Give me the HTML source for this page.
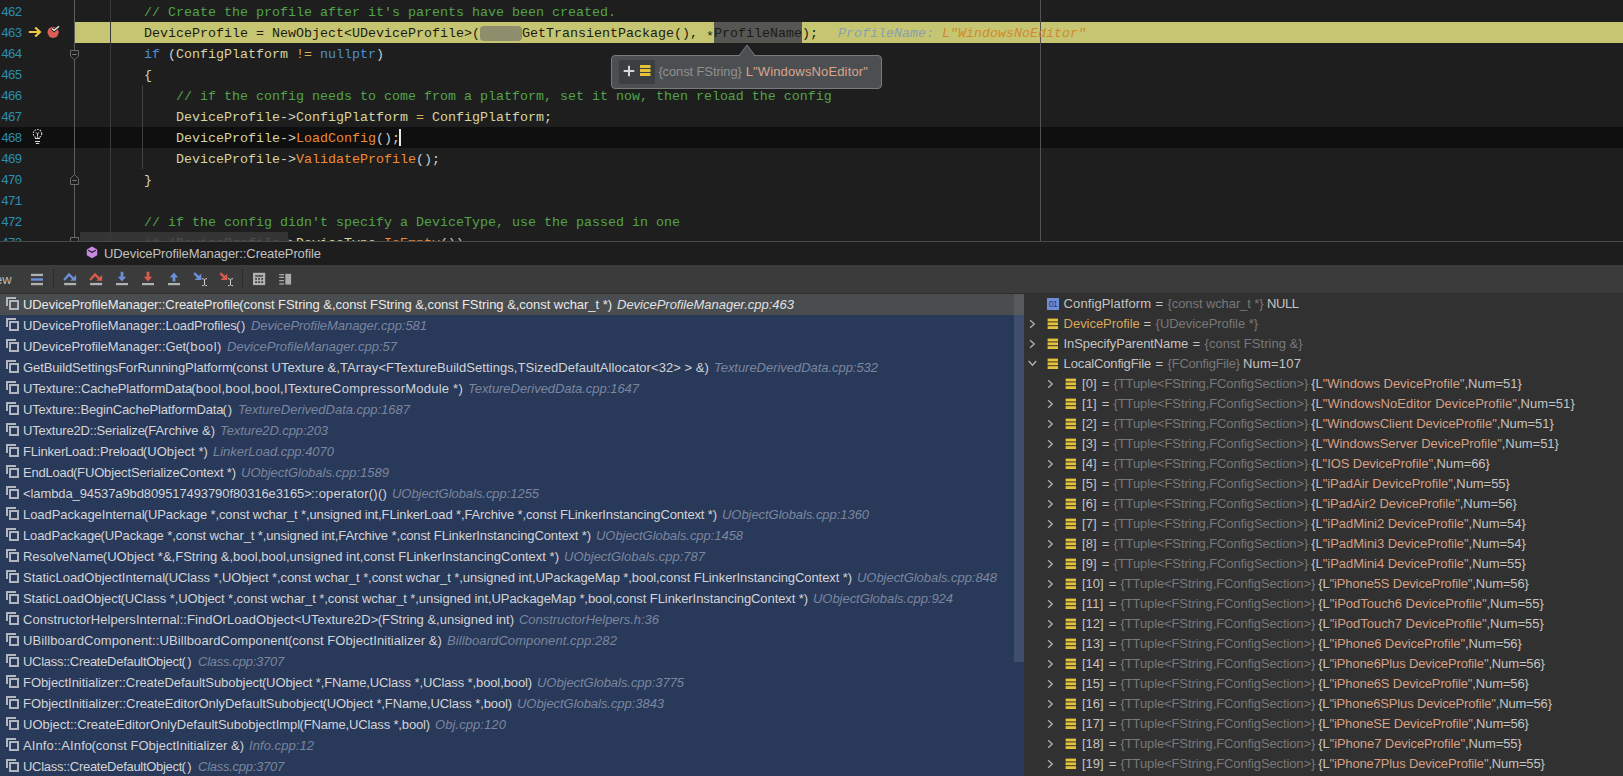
<!DOCTYPE html>
<html><head><meta charset="utf-8"><title>debugger</title>
<style>
html,body{margin:0;padding:0;}
body{width:1623px;height:776px;overflow:hidden;background:#1e1e1e;position:relative;font-family:"Liberation Sans",sans-serif;}
.abs{position:absolute;}
#editor{position:absolute;left:0;top:0;width:1623px;height:241px;background:#1e1e1e;overflow:hidden;}
.ln{position:absolute;left:0;width:1623px;height:21px;}
.num{position:absolute;left:1px;top:0;height:21px;line-height:21px;font-family:"Liberation Mono",monospace;font-size:13px;color:#2b8fb3;letter-spacing:-1px;}
.code{position:absolute;left:144px;top:0;height:21px;line-height:21px;font-family:"Liberation Mono",monospace;font-size:13.333px;color:#d6d4a0;white-space:pre;}
.c{color:#52a349;} .k{color:#4f8fd0;} .m{color:#f08a32;} .p{color:#c4d0d8;} .o{color:#dcae52;} .w{color:#d2d2c2;}
.dk{color:#1c1c14;}
#crumb{position:absolute;left:0;top:241px;width:1623px;height:24px;background:#1d1d1d;border-top:1px solid #484848;box-sizing:border-box;}
#tbar{position:absolute;left:0;top:265px;width:1623px;height:29px;background:#3b3b3b;border-bottom:1px solid #2e2e2e;box-sizing:border-box;}
#stack{position:absolute;left:0;top:294px;width:1024px;height:482px;background:#293959;overflow:hidden;}
.fr{position:absolute;left:0;width:1014px;height:21px;line-height:21px;font-size:13px;color:#d2d4d8;white-space:pre;}
.fr .t{position:absolute;left:23px;top:0;}
.fr .l{position:absolute;top:0;font-style:italic;color:#7a869f;}
.fr svg{position:absolute;left:5px;top:2px;}
#vars{position:absolute;left:1024px;top:294px;width:599px;height:482px;background:#313131;overflow:hidden;}
.vr{position:absolute;left:0;width:599px;height:20px;line-height:20px;font-size:13px;color:#c4c4c4;white-space:pre;}
.vr .t{position:absolute;top:0;}
.g{color:#787878;} .s{color:#d6a084;} .y{color:#dca85a;}
</style></head><body>

<div id="editor">
<div class="abs" style="left:0;top:127px;width:1623px;height:21px;background:#0f0f0f"></div>
<div class="abs" style="left:75px;top:22px;width:1548px;height:21px;background:#c6c672"></div>
<div class="abs" style="left:714px;top:22px;width:88px;height:21px;background:#565652"></div>
<div class="abs" style="left:480px;top:26px;width:42px;height:15px;border-radius:4px;background:#8e8e6c"></div>
<div class="abs" style="left:74px;top:0;width:1px;height:241px;background:#5e5e5e"></div>
<div class="abs" style="left:110px;top:0;width:1px;height:241px;background:#3a3a3a"></div>
<div class="abs" style="left:142px;top:85px;width:1px;height:84px;background:#404040"></div>
<div class="abs" style="left:1040px;top:0;width:1px;height:241px;background:#525252"></div>
<div class="ln" style="top:2px"><span class="num">462</span><span class="code"><span class="c">// Create the profile after it's parents have been created.</span></span></div>
<div class="ln" style="top:23px"><span class="num">463</span><span class="code"><span class="dk">DeviceProfile = NewObject&lt;UDeviceProfile&gt;(<span style="display:inline-block;width:42px"></span>GetTransientPackage(), <span style="position:relative;top:2.5px">*</span>ProfileName);</span></span></div>
<div class="ln" style="top:44px"><span class="num">464</span><span class="code"><span class="k">if</span> <span class="p">(</span>ConfigPlatform <span class="o">!=</span> <span class="k">nullptr</span><span class="p">)</span></span></div>
<div class="ln" style="top:65px"><span class="num">465</span><span class="code"><span class="w">{</span></span></div>
<div class="ln" style="top:86px"><span class="num">466</span><span class="code">    <span class="c">// if the config needs to come from a platform, set it now, then reload the config</span></span></div>
<div class="ln" style="top:107px"><span class="num">467</span><span class="code">    DeviceProfile<span class="w">-&gt;</span>ConfigPlatform <span class="o">=</span> ConfigPlatform<span class="w">;</span></span></div>
<div class="ln" style="top:128px"><span class="num">468</span><span class="code">    DeviceProfile<span class="w">-&gt;</span><span class="m">LoadConfig</span><span class="p">()</span><span class="w">;</span></span></div>
<div class="ln" style="top:149px"><span class="num">469</span><span class="code">    DeviceProfile<span class="w">-&gt;</span><span class="m">ValidateProfile</span><span class="p">()</span><span class="w">;</span></span></div>
<div class="ln" style="top:170px"><span class="num">470</span><span class="code"><span class="w">}</span></span></div>
<div class="ln" style="top:191px"><span class="num">471</span><span class="code"></span></div>
<div class="ln" style="top:212px"><span class="num">472</span><span class="code"><span class="c">// if the config didn't specify a DeviceType, use the passed in one</span></span></div>
<div class="ln" style="top:233px"><span class="num">473</span><span class="code"><span class="k">if</span> <span class="p">(</span>DeviceProfile<span class="w">-&gt;</span>DeviceType<span class="w">.</span><span class="m">IsEmpty</span><span class="p">())</span></span></div>
<div class="abs" style="left:838px;top:23px;height:21px;line-height:21px;font-family:'Liberation Mono',monospace;font-size:13.333px;font-style:italic;white-space:pre;color:#8a9fb0">ProfileName: <span style="color:#cf8a2e">L"WindowsNoEditor"</span></div>
<svg class="abs" style="left:27px;top:25px" width="16" height="14" viewBox="0 0 16 14"><path d="M1.8 7 H12.6 M8.2 2.4 L13 7 L8.2 11.6" fill="none" stroke="#f2c744" stroke-width="2.1" stroke-linecap="butt" stroke-linejoin="miter"/></svg>
<svg class="abs" style="left:45px;top:23px" width="18" height="18" viewBox="0 0 18 18"><circle cx="8.1" cy="9.3" r="5.6" fill="#db5d55"/><path d="M6.6 5.4 L9.2 7.5 L14.2 3.2" fill="none" stroke="#1e1e1e" stroke-width="3"/><path d="M6.8 5.5 L9.2 7.4 L14 3.3" fill="none" stroke="#e4e4e4" stroke-width="1.5"/></svg>
<svg class="abs" style="left:69px;top:49px" width="12" height="13" viewBox="0 0 12 13"><path d="M1.5 1.5 H9.5 V7 L5.5 11 L1.5 7 Z" fill="#1e1e1e" stroke="#6a6a6a" stroke-width="1"/><path d="M3.3 5.5 H7.7" stroke="#7a7a7a" stroke-width="1"/></svg>
<svg class="abs" style="left:69px;top:173px" width="12" height="13" viewBox="0 0 12 13"><path d="M1.5 11.5 H9.5 V5.5 L5.5 1.5 L1.5 5.5 Z" fill="#1e1e1e" stroke="#6a6a6a" stroke-width="1"/><path d="M3.3 7.5 H7.7" stroke="#7a7a7a" stroke-width="1"/></svg>
<svg class="abs" style="left:69px;top:236px" width="12" height="13" viewBox="0 0 12 13"><path d="M1.5 1.5 H9.5 V7 L5.5 11 L1.5 7 Z" fill="#1e1e1e" stroke="#6a6a6a" stroke-width="1"/></svg>
<svg class="abs" style="left:32px;top:129px" width="12" height="16" viewBox="0 0 12 16"><circle cx="5.5" cy="4.6" r="4.2" fill="none" stroke="#d4d4d4" stroke-width="1.1" stroke-dasharray="1.6 1.1"/><path d="M4.1 3.4 L5.5 5 L6.9 3.4 M5.5 5 V7.6" fill="none" stroke="#d4d4d4" stroke-width="1"/><path d="M3 9.5 H8 M3 12.5 H8 M3.8 14.5 H7.2" stroke="#dcdcdc" stroke-width="1.1"/></svg>
<div class="abs" style="left:399px;top:129px;width:2px;height:17px;background:#e8e8e8"></div>
<div class="abs" style="left:80px;top:232px;width:208px;height:9px;background:#3a3a3a;opacity:.85"></div>
</div>
<div class="abs" style="left:611px;top:55px;width:271px;height:34px;box-sizing:border-box;background:#4c4f51;border:1px solid #787a7c;border-radius:4px;"></div>
<svg class="abs" style="left:735.5px;top:43.6px" width="22" height="13" viewBox="0 0 22 13"><path d="M3.5 11 L11 1 L18.5 11" fill="#4c4f51" stroke="#787a7c" stroke-width="1"/><rect x="4.2" y="10.6" width="13.6" height="1.6" fill="#4c4f51"/></svg>
<div class="abs" style="left:619px;top:60px;width:36px;height:24px;background:#3c3f41;border-radius:1px"></div>
<div class="abs" style="letter-spacing:-0.1252px;left:658.4px;top:61px;height:21px;line-height:21px;font-size:13px;white-space:pre;color:#8e9092">{const FString}</div>
<div class="abs" style="letter-spacing:0.1403px;left:745.7px;top:61px;height:21px;line-height:21px;font-size:13px;white-space:pre;color:#dba48a">L"WindowsNoEditor"</div>
<svg class="abs" style="left:623px;top:65px" width="12" height="12" viewBox="0 0 12 12"><path d="M6 0.7 V11.3 M0.7 6 H11.3" stroke="#d8d8d8" stroke-width="2"/></svg>
<svg class="abs" style="left:640px;top:65px" width="12" height="12" viewBox="0 0 12 12"><rect x="0" y="0" width="10.5" height="3" fill="#e6c23a"/><rect x="0" y="4" width="10.5" height="3" fill="#e6c23a"/><rect x="0" y="8" width="10.5" height="3" fill="#e6c23a"/></svg>
<div id="crumb"><svg class="abs" style="left:86px;top:4px" width="12" height="13" viewBox="0 0 12 13"><path d="M6 0.6 L11.2 3.4 V9.2 L6 12.2 L0.8 9.2 V3.4 Z" fill="#c78ae0"/><path d="M2.2 4.2 L6 6.3 L9.8 4.2" fill="none" stroke="#2a1f30" stroke-width="1.3"/></svg><div class="abs" style="left:104px;top:0;letter-spacing:-0.0938px;height:23px;line-height:23px;font-size:13px;color:#c0c0c0;white-space:pre">UDeviceProfileManager::CreateProfile</div></div>
<div id="tbar"><div class="abs" style="left:-5px;top:1px;height:29px;line-height:28px;font-size:13px;color:#bbbbbb">ew</div>
<svg class="abs" style="left:31px;top:8px" width="12" height="13" viewBox="0 0 12 13"><rect x="0" y="0.8" width="12" height="2.3" fill="#afb1b3"/><rect x="0" y="5.3" width="12" height="2.4" fill="#6d8fd8"/><rect x="0" y="9.9" width="12" height="2.3" fill="#afb1b3"/></svg>
<div class="abs" style="left:53px;top:4px;width:1px;height:19px;background:#2d2d2d"></div>
<svg class="abs" style="left:63px;top:5px" width="14" height="17" viewBox="0 0 14 17"><path d="M1.1 9.9 L6.0 4.4 L10.6 9" fill="none" stroke="#6d8fd8" stroke-width="2.3"/><path d="M13.1 5.0 V10.8 H7.3 Z" fill="#6d8fd8"/><rect x="1.1" y="12.9" width="12" height="2.3" fill="#afb1b3"/></svg>
<svg class="abs" style="left:89px;top:5px" width="14" height="17" viewBox="0 0 14 17"><path d="M1.1 9.9 L6.0 4.4 L10.6 9" fill="none" stroke="#da5a4c" stroke-width="2.3"/><path d="M13.1 5.0 V10.8 H7.3 Z" fill="#da5a4c"/><rect x="1.1" y="12.9" width="12" height="2.3" fill="#afb1b3"/></svg>
<svg class="abs" style="left:115px;top:5px" width="14" height="17" viewBox="0 0 14 17"><rect x="5.6" y="1.8" width="2.8" height="6" fill="#6d8fd8"/><path d="M2.8 6.8 H11.2 L7 11.4 Z" fill="#6d8fd8"/><rect x="1" y="13" width="12" height="2.2" fill="#afb1b3"/></svg>
<svg class="abs" style="left:141px;top:5px" width="14" height="17" viewBox="0 0 14 17"><rect x="5.6" y="1.8" width="2.8" height="6" fill="#da5a4c"/><path d="M2.8 6.8 H11.2 L7 11.4 Z" fill="#da5a4c"/><rect x="1" y="13" width="12" height="2.2" fill="#afb1b3"/></svg>
<svg class="abs" style="left:167px;top:5px" width="14" height="17" viewBox="0 0 14 17"><path d="M2.8 7.4 H11.2 L7 2.4 Z" fill="#6d8fd8"/><rect x="5.6" y="7" width="2.8" height="4.6" fill="#6d8fd8"/><rect x="1" y="13" width="12" height="2.2" fill="#afb1b3"/></svg>
<svg class="abs" style="left:192px;top:5px" width="16" height="18" viewBox="0 0 16 18"><path d="M2.2 3.2 L7.6 8.3" fill="none" stroke="#6d8fd8" stroke-width="2.4"/><path d="M9.3 3.6 V9.9 H2.6 Z" fill="#6d8fd8"/><path d="M10 8.7 Q11.8 8.7 12.5 9.6 Q13.2 8.7 15 8.7 M10 15.7 Q11.8 15.7 12.5 14.8 Q13.2 15.7 15 15.7 M12.5 9.4 V15" fill="none" stroke="#cfcfcf" stroke-width="1"/></svg>
<svg class="abs" style="left:218px;top:5px" width="16" height="18" viewBox="0 0 16 18"><path d="M2.2 3.2 L7.6 8.3" fill="none" stroke="#da5a4c" stroke-width="2.4"/><path d="M9.3 3.6 V9.9 H2.6 Z" fill="#da5a4c"/><path d="M10 8.7 Q11.8 8.7 12.5 9.6 Q13.2 8.7 15 8.7 M10 15.7 Q11.8 15.7 12.5 14.8 Q13.2 15.7 15 15.7 M12.5 9.4 V15" fill="none" stroke="#cfcfcf" stroke-width="1"/></svg>
<div class="abs" style="left:242px;top:4px;width:1px;height:19px;background:#2d2d2d"></div>
<svg class="abs" style="left:253px;top:7px" width="13" height="14" viewBox="0 0 13 14"><rect x="0" y="0.8" width="12.2" height="12.3" fill="#afb1b3"/><g fill="#323232"><rect x="2.2" y="3.3" width="7.8" height="1.3"/><rect x="2.2" y="6.1" width="1.7" height="1.6"/><rect x="5.2" y="6.1" width="1.7" height="1.6"/><rect x="8.3" y="6.1" width="1.7" height="1.6"/><rect x="2.2" y="9.3" width="1.7" height="1.7"/><rect x="5.2" y="9.3" width="1.7" height="1.7"/><rect x="8.3" y="9.3" width="1.7" height="1.7"/></g></svg>
<svg class="abs" style="left:279px;top:8px" width="13" height="13" viewBox="0 0 13 13"><g fill="#afb1b3"><rect x="0.2" y="1.1" width="4.8" height="1.2"/><rect x="0.2" y="3.8" width="4.8" height="1.2"/><rect x="0.2" y="7.1" width="4.8" height="1.2"/><rect x="0.2" y="10.3" width="4.8" height="1.2"/></g><rect x="6.3" y="0.8" width="5.8" height="10.8" fill="#a9abad"/></svg>
</div>
<div id="stack">
<div class="abs" style="left:0;top:0;width:1014px;height:21px;background:#4a4d4f"></div>

<div class="abs" style="left:1014px;top:0;width:10px;height:368px;background:#414d6c"></div>
<div class="abs" style="left:1014px;top:0;width:10px;height:21px;background:#575a5c"></div>
<div class="fr" style="top:0px"><svg width="15" height="15" viewBox="0 0 15 15"><path d="M2 10 V2 H11" fill="none" stroke="#b2b6be" stroke-width="2"/><rect x="5" y="5" width="8" height="8" fill="none" stroke="#b2b6be" stroke-width="2"/></svg><span class="t" style="letter-spacing:-0.0938px;color:#e8e8e8;">UDeviceProfileManager::CreateProfile</span><span class="t" style="left:239.3px;letter-spacing:-0.0349px;color:#e8e8e8;">(const FString &amp;,const FString &amp;,const FString &amp;,const wchar_t *)</span><span class="l" style="left:617px;letter-spacing:-0.0106px;color:#e0e0e0;">DeviceProfileManager.cpp:463</span></div>
<div class="fr" style="top:21px"><svg width="15" height="15" viewBox="0 0 15 15"><path d="M2 10 V2 H11" fill="none" stroke="#b2b6be" stroke-width="2"/><rect x="5" y="5" width="8" height="8" fill="none" stroke="#b2b6be" stroke-width="2"/></svg><span class="t" style="letter-spacing:-0.0878px;">UDeviceProfileManager::LoadProfiles</span><span class="t" style="left:236.0px;letter-spacing:0.6641px;">()</span><span class="l" style="left:251px;letter-spacing:-0.0463px;">DeviceProfileManager.cpp:581</span></div>
<div class="fr" style="top:42px"><svg width="15" height="15" viewBox="0 0 15 15"><path d="M2 10 V2 H11" fill="none" stroke="#b2b6be" stroke-width="2"/><rect x="5" y="5" width="8" height="8" fill="none" stroke="#b2b6be" stroke-width="2"/></svg><span class="t" style="letter-spacing:-0.0911px;">UDeviceProfileManager::Get</span><span class="t" style="left:185.4px;letter-spacing:0.5587px;">(bool)</span><span class="l" style="left:227px;letter-spacing:-0.0023px;">DeviceProfileManager.cpp:57</span></div>
<div class="fr" style="top:63px"><svg width="15" height="15" viewBox="0 0 15 15"><path d="M2 10 V2 H11" fill="none" stroke="#b2b6be" stroke-width="2"/><rect x="5" y="5" width="8" height="8" fill="none" stroke="#b2b6be" stroke-width="2"/></svg><span class="t" style="letter-spacing:-0.1019px;">GetBuildSettingsForRunningPlatform</span><span class="t" style="left:232.0px;letter-spacing:0.0601px;">(const UTexture &amp;,TArray&lt;FTextureBuildSettings,TSizedDefaultAllocator&lt;32&gt; &gt; &amp;)</span><span class="l" style="left:714px;letter-spacing:-0.0391px;">TextureDerivedData.cpp:532</span></div>
<div class="fr" style="top:84px"><svg width="15" height="15" viewBox="0 0 15 15"><path d="M2 10 V2 H11" fill="none" stroke="#b2b6be" stroke-width="2"/><rect x="5" y="5" width="8" height="8" fill="none" stroke="#b2b6be" stroke-width="2"/></svg><span class="t" style="letter-spacing:-0.1366px;">UTexture::CachePlatformData</span><span class="t" style="left:191.3px;letter-spacing:0.2351px;">(bool,bool,bool,ITextureCompressorModule *)</span><span class="l" style="left:468px;letter-spacing:-0.0463px;">TextureDerivedData.cpp:1647</span></div>
<div class="fr" style="top:105px"><svg width="15" height="15" viewBox="0 0 15 15"><path d="M2 10 V2 H11" fill="none" stroke="#b2b6be" stroke-width="2"/><rect x="5" y="5" width="8" height="8" fill="none" stroke="#b2b6be" stroke-width="2"/></svg><span class="t" style="letter-spacing:-0.1764px;">UTexture::BeginCachePlatformData</span><span class="t" style="left:222.6px;letter-spacing:0.8704px;">()</span><span class="l" style="left:238px;letter-spacing:-0.0093px;">TextureDerivedData.cpp:1687</span></div>
<div class="fr" style="top:126px"><svg width="15" height="15" viewBox="0 0 15 15"><path d="M2 10 V2 H11" fill="none" stroke="#b2b6be" stroke-width="2"/><rect x="5" y="5" width="8" height="8" fill="none" stroke="#b2b6be" stroke-width="2"/></svg><span class="t" style="letter-spacing:-0.1917px;">UTexture2D::Serialize</span><span class="t" style="left:144.0px;letter-spacing:-0.0430px;">(FArchive &amp;)</span><span class="l" style="left:220px;letter-spacing:-0.0809px;">Texture2D.cpp:203</span></div>
<div class="fr" style="top:147px"><svg width="15" height="15" viewBox="0 0 15 15"><path d="M2 10 V2 H11" fill="none" stroke="#b2b6be" stroke-width="2"/><rect x="5" y="5" width="8" height="8" fill="none" stroke="#b2b6be" stroke-width="2"/></svg><span class="t" style="letter-spacing:-0.1906px;">FLinkerLoad::Preload</span><span class="t" style="left:142.8px;letter-spacing:0.0826px;">(UObject *)</span><span class="l" style="left:213px;letter-spacing:-0.0230px;">LinkerLoad.cpp:4070</span></div>
<div class="fr" style="top:168px"><svg width="15" height="15" viewBox="0 0 15 15"><path d="M2 10 V2 H11" fill="none" stroke="#b2b6be" stroke-width="2"/><rect x="5" y="5" width="8" height="8" fill="none" stroke="#b2b6be" stroke-width="2"/></svg><span class="t" style="letter-spacing:-0.2084px;">EndLoad</span><span class="t" style="left:72.9px;letter-spacing:-0.1353px;">(FUObjectSerializeContext *)</span><span class="l" style="left:241px;letter-spacing:-0.0068px;">UObjectGlobals.cpp:1589</span></div>
<div class="fr" style="top:189px"><svg width="15" height="15" viewBox="0 0 15 15"><path d="M2 10 V2 H11" fill="none" stroke="#b2b6be" stroke-width="2"/><rect x="5" y="5" width="8" height="8" fill="none" stroke="#b2b6be" stroke-width="2"/></svg><span class="t" style="letter-spacing:-0.1002px;">&lt;lambda_94537a9bd809517493790f80316e3165&gt;</span><span class="t" style="left:311.0px;letter-spacing:0.2165px;">::operator()()</span><span class="l" style="left:392px;letter-spacing:-0.0503px;">UObjectGlobals.cpp:1255</span></div>
<div class="fr" style="top:210px"><svg width="15" height="15" viewBox="0 0 15 15"><path d="M2 10 V2 H11" fill="none" stroke="#b2b6be" stroke-width="2"/><rect x="5" y="5" width="8" height="8" fill="none" stroke="#b2b6be" stroke-width="2"/></svg><span class="t" style="letter-spacing:-0.0724px;">LoadPackageInternal</span><span class="t" style="left:143.8px;letter-spacing:-0.1223px;">(UPackage *,const wchar_t *,unsigned int,FLinkerLoad *,FArchive *,const FLinkerInstancingContext *)</span><span class="l" style="left:722px;letter-spacing:-0.0503px;">UObjectGlobals.cpp:1360</span></div>
<div class="fr" style="top:231px"><svg width="15" height="15" viewBox="0 0 15 15"><path d="M2 10 V2 H11" fill="none" stroke="#b2b6be" stroke-width="2"/><rect x="5" y="5" width="8" height="8" fill="none" stroke="#b2b6be" stroke-width="2"/></svg><span class="t" style="letter-spacing:-0.1205px;">LoadPackage</span><span class="t" style="left:100.5px;letter-spacing:-0.1206px;">(UPackage *,const wchar_t *,unsigned int,FArchive *,const FLinkerInstancingContext *)</span><span class="l" style="left:596px;letter-spacing:-0.0503px;">UObjectGlobals.cpp:1458</span></div>
<div class="fr" style="top:252px"><svg width="15" height="15" viewBox="0 0 15 15"><path d="M2 10 V2 H11" fill="none" stroke="#b2b6be" stroke-width="2"/><rect x="5" y="5" width="8" height="8" fill="none" stroke="#b2b6be" stroke-width="2"/></svg><span class="t" style="letter-spacing:-0.1051px;">ResolveName</span><span class="t" style="left:102.8px;letter-spacing:0.0124px;">(UObject *&amp;,FString &amp;,bool,bool,unsigned int,const FLinkerInstancingContext *)</span><span class="l" style="left:564px;letter-spacing:0.0036px;">UObjectGlobals.cpp:787</span></div>
<div class="fr" style="top:273px"><svg width="15" height="15" viewBox="0 0 15 15"><path d="M2 10 V2 H11" fill="none" stroke="#b2b6be" stroke-width="2"/><rect x="5" y="5" width="8" height="8" fill="none" stroke="#b2b6be" stroke-width="2"/></svg><span class="t" style="letter-spacing:-0.0113px;">StaticLoadObjectInternal</span><span class="t" style="left:164.4px;letter-spacing:-0.0828px;">(UClass *,UObject *,const wchar_t *,const wchar_t *,unsigned int,UPackageMap *,bool,const FLinkerInstancingContext *)</span><span class="l" style="left:857px;letter-spacing:-0.0419px;">UObjectGlobals.cpp:848</span></div>
<div class="fr" style="top:294px"><svg width="15" height="15" viewBox="0 0 15 15"><path d="M2 10 V2 H11" fill="none" stroke="#b2b6be" stroke-width="2"/><rect x="5" y="5" width="8" height="8" fill="none" stroke="#b2b6be" stroke-width="2"/></svg><span class="t" style="letter-spacing:-0.0506px;">StaticLoadObject</span><span class="t" style="left:120.5px;letter-spacing:-0.0836px;">(UClass *,UObject *,const wchar_t *,const wchar_t *,unsigned int,UPackageMap *,bool,const FLinkerInstancingContext *)</span><span class="l" style="left:813px;letter-spacing:-0.0419px;">UObjectGlobals.cpp:924</span></div>
<div class="fr" style="top:315px"><svg width="15" height="15" viewBox="0 0 15 15"><path d="M2 10 V2 H11" fill="none" stroke="#b2b6be" stroke-width="2"/><rect x="5" y="5" width="8" height="8" fill="none" stroke="#b2b6be" stroke-width="2"/></svg><span class="t" style="letter-spacing:0.0496px;">ConstructorHelpersInternal::FindOrLoadObject&lt;UTexture2D&gt;</span><span class="t" style="left:377.7px;letter-spacing:-0.0113px;">(FString &amp;,unsigned int)</span><span class="l" style="left:519px;letter-spacing:-0.0394px;">ConstructorHelpers.h:36</span></div>
<div class="fr" style="top:336px"><svg width="15" height="15" viewBox="0 0 15 15"><path d="M2 10 V2 H11" fill="none" stroke="#b2b6be" stroke-width="2"/><rect x="5" y="5" width="8" height="8" fill="none" stroke="#b2b6be" stroke-width="2"/></svg><span class="t" style="letter-spacing:0.1000px;">UBillboardComponent::UBillboardComponent</span><span class="t" style="left:287.9px;letter-spacing:0.0595px;">(const FObjectInitializer &amp;)</span><span class="l" style="left:447px;letter-spacing:0.0895px;">BillboardComponent.cpp:282</span></div>
<div class="fr" style="top:357px"><svg width="15" height="15" viewBox="0 0 15 15"><path d="M2 10 V2 H11" fill="none" stroke="#b2b6be" stroke-width="2"/><rect x="5" y="5" width="8" height="8" fill="none" stroke="#b2b6be" stroke-width="2"/></svg><span class="t" style="letter-spacing:-0.2890px;">UClass::CreateDefaultObject</span><span class="t" style="left:181.4px;letter-spacing:1.4656px;">()</span><span class="l" style="left:198px;letter-spacing:-0.2589px;">Class.cpp:3707</span></div>
<div class="fr" style="top:378px"><svg width="15" height="15" viewBox="0 0 15 15"><path d="M2 10 V2 H11" fill="none" stroke="#b2b6be" stroke-width="2"/><rect x="5" y="5" width="8" height="8" fill="none" stroke="#b2b6be" stroke-width="2"/></svg><span class="t" style="letter-spacing:-0.0589px;">FObjectInitializer::CreateDefaultSubobject</span><span class="t" style="left:261.9px;letter-spacing:-0.1148px;">(UObject *,FName,UClass *,UClass *,bool,bool)</span><span class="l" style="left:537px;letter-spacing:-0.0503px;">UObjectGlobals.cpp:3775</span></div>
<div class="fr" style="top:399px"><svg width="15" height="15" viewBox="0 0 15 15"><path d="M2 10 V2 H11" fill="none" stroke="#b2b6be" stroke-width="2"/><rect x="5" y="5" width="8" height="8" fill="none" stroke="#b2b6be" stroke-width="2"/></svg><span class="t" style="letter-spacing:-0.0493px;">FObjectInitializer::CreateEditorOnlyDefaultSubobject</span><span class="t" style="left:322.5px;letter-spacing:-0.1094px;">(UObject *,FName,UClass *,bool)</span><span class="l" style="left:517px;letter-spacing:-0.0503px;">UObjectGlobals.cpp:3843</span></div>
<div class="fr" style="top:420px"><svg width="15" height="15" viewBox="0 0 15 15"><path d="M2 10 V2 H11" fill="none" stroke="#b2b6be" stroke-width="2"/><rect x="5" y="5" width="8" height="8" fill="none" stroke="#b2b6be" stroke-width="2"/></svg><span class="t" style="letter-spacing:-0.0059px;">UObject::CreateEditorOnlyDefaultSubobjectImpl</span><span class="t" style="left:299.5px;letter-spacing:-0.1503px;">(FName,UClass *,bool)</span><span class="l" style="left:435px;letter-spacing:0.0810px;">Obj.cpp:120</span></div>
<div class="fr" style="top:441px"><svg width="15" height="15" viewBox="0 0 15 15"><path d="M2 10 V2 H11" fill="none" stroke="#b2b6be" stroke-width="2"/><rect x="5" y="5" width="8" height="8" fill="none" stroke="#b2b6be" stroke-width="2"/></svg><span class="t" style="letter-spacing:0.1043px;">AInfo::AInfo</span><span class="t" style="left:91.5px;letter-spacing:0.0022px;">(const FObjectInitializer &amp;)</span><span class="l" style="left:249px;letter-spacing:0.0611px;">Info.cpp:12</span></div>
<div class="fr" style="top:462px"><svg width="15" height="15" viewBox="0 0 15 15"><path d="M2 10 V2 H11" fill="none" stroke="#b2b6be" stroke-width="2"/><rect x="5" y="5" width="8" height="8" fill="none" stroke="#b2b6be" stroke-width="2"/></svg><span class="t" style="letter-spacing:-0.2890px;">UClass::CreateDefaultObject</span><span class="t" style="left:181.4px;letter-spacing:1.4656px;">()</span><span class="l" style="left:198px;letter-spacing:-0.2589px;">Class.cpp:3707</span></div>
</div>
<div id="vars">
<div class="vr" style="top:0px">
<div class="abs" style="left:23px;top:4px;width:12px;height:12px;background:#6d8ed6;font-size:8.5px;line-height:12px;color:#27366a;text-align:center;letter-spacing:-0.4px">01</div>
<span class="t " style="left:39.6px;letter-spacing:0.1083px;">ConfigPlatform</span>
<span class="t " style="left:131.6px;letter-spacing:0.7971px;">=</span>
<span class="t g" style="left:143.6px;letter-spacing:-0.0984px;">{const wchar_t *}</span>
<span class="t " style="left:242.9px;letter-spacing:-0.3868px;">NULL</span>
</div>
<div class="vr" style="top:20px">
<svg class="abs" style="left:3px;top:3.5px" width="10" height="12" viewBox="0 0 10 12"><path d="M3.1 2.2 L7.3 6 L3.1 9.8" fill="none" stroke="#b2b2b2" stroke-width="1.3"/></svg>
<svg class="abs" style="left:23px;top:4px" width="12" height="12" viewBox="0 0 12 12"><rect x="0.6" y="0.6" width="10.4" height="2.8" fill="#e6c23a"/><rect x="0.6" y="4.4" width="10.4" height="2.8" fill="#e6c23a"/><rect x="0.6" y="8.2" width="10.4" height="2.8" fill="#e6c23a"/></svg>
<span class="t y" style="left:39.6px;letter-spacing:-0.0384px;">DeviceProfile</span>
<span class="t " style="left:119.6px;letter-spacing:0.7971px;">=</span>
<span class="t g" style="left:131.6px;letter-spacing:-0.0520px;">{UDeviceProfile *}</span>
</div>
<div class="vr" style="top:40px">
<svg class="abs" style="left:3px;top:3.5px" width="10" height="12" viewBox="0 0 10 12"><path d="M3.1 2.2 L7.3 6 L3.1 9.8" fill="none" stroke="#b2b2b2" stroke-width="1.3"/></svg>
<svg class="abs" style="left:23px;top:4px" width="12" height="12" viewBox="0 0 12 12"><rect x="0.6" y="0.6" width="10.4" height="2.8" fill="#e6c23a"/><rect x="0.6" y="4.4" width="10.4" height="2.8" fill="#e6c23a"/><rect x="0.6" y="8.2" width="10.4" height="2.8" fill="#e6c23a"/></svg>
<span class="t " style="left:39.6px;letter-spacing:-0.1028px;">InSpecifyParentName</span>
<span class="t " style="left:168.4px;letter-spacing:0.7971px;">=</span>
<span class="t g" style="left:180.6px;letter-spacing:0.0322px;">{const FString &amp;}</span>
</div>
<div class="vr" style="top:60px">
<svg class="abs" style="left:3px;top:5px" width="12" height="10" viewBox="0 0 12 10"><path d="M1.7 2 L5.45 6.3 L9.2 2" fill="none" stroke="#b2b2b2" stroke-width="1.3"/></svg>
<svg class="abs" style="left:23px;top:4px" width="12" height="12" viewBox="0 0 12 12"><rect x="0.6" y="0.6" width="10.4" height="2.8" fill="#e6c23a"/><rect x="0.6" y="4.4" width="10.4" height="2.8" fill="#e6c23a"/><rect x="0.6" y="8.2" width="10.4" height="2.8" fill="#e6c23a"/></svg>
<span class="t " style="left:39.6px;letter-spacing:-0.1406px;">LocalConfigFile</span>
<span class="t " style="left:131.6px;letter-spacing:0.7971px;">=</span>
<span class="t g" style="left:143.6px;letter-spacing:-0.2270px;">{FConfigFile}</span>
<span class="t " style="left:218.9px;letter-spacing:0.2231px;">Num=107</span>
</div>
<div class="vr" style="top:80px">
<svg class="abs" style="left:21px;top:3.5px" width="10" height="12" viewBox="0 0 10 12"><path d="M3.1 2.2 L7.3 6 L3.1 9.8" fill="none" stroke="#b2b2b2" stroke-width="1.3"/></svg>
<svg class="abs" style="left:41px;top:4px" width="12" height="12" viewBox="0 0 12 12"><rect x="0.6" y="0.6" width="10.4" height="2.8" fill="#e6c23a"/><rect x="0.6" y="4.4" width="10.4" height="2.8" fill="#e6c23a"/><rect x="0.6" y="8.2" width="10.4" height="2.8" fill="#e6c23a"/></svg>
<span class="t " style="left:58.0px;letter-spacing:0.0469px;">[0]</span>
<span class="t " style="left:77.8px;letter-spacing:0.4062px;">=</span>
<span class="t g" style="left:89.5px;letter-spacing:-0.1108px;">{TTuple&lt;FString,FConfigSection&gt;}</span>
<span class="t " style="left:287.2px;letter-spacing:-0.0185px;"><span>{L</span><span class="s">"Windows DeviceProfile"</span><span>,Num=51}</span></span>
</div>
<div class="vr" style="top:100px">
<svg class="abs" style="left:21px;top:3.5px" width="10" height="12" viewBox="0 0 10 12"><path d="M3.1 2.2 L7.3 6 L3.1 9.8" fill="none" stroke="#b2b2b2" stroke-width="1.3"/></svg>
<svg class="abs" style="left:41px;top:4px" width="12" height="12" viewBox="0 0 12 12"><rect x="0.6" y="0.6" width="10.4" height="2.8" fill="#e6c23a"/><rect x="0.6" y="4.4" width="10.4" height="2.8" fill="#e6c23a"/><rect x="0.6" y="8.2" width="10.4" height="2.8" fill="#e6c23a"/></svg>
<span class="t " style="left:58.0px;letter-spacing:0.0469px;">[1]</span>
<span class="t " style="left:77.8px;letter-spacing:0.4062px;">=</span>
<span class="t g" style="left:89.5px;letter-spacing:-0.1108px;">{TTuple&lt;FString,FConfigSection&gt;}</span>
<span class="t " style="left:287.2px;letter-spacing:0.0440px;"><span>{L</span><span class="s">"WindowsNoEditor DeviceProfile"</span><span>,Num=51}</span></span>
</div>
<div class="vr" style="top:120px">
<svg class="abs" style="left:21px;top:3.5px" width="10" height="12" viewBox="0 0 10 12"><path d="M3.1 2.2 L7.3 6 L3.1 9.8" fill="none" stroke="#b2b2b2" stroke-width="1.3"/></svg>
<svg class="abs" style="left:41px;top:4px" width="12" height="12" viewBox="0 0 12 12"><rect x="0.6" y="0.6" width="10.4" height="2.8" fill="#e6c23a"/><rect x="0.6" y="4.4" width="10.4" height="2.8" fill="#e6c23a"/><rect x="0.6" y="8.2" width="10.4" height="2.8" fill="#e6c23a"/></svg>
<span class="t " style="left:58.0px;letter-spacing:0.0469px;">[2]</span>
<span class="t " style="left:77.8px;letter-spacing:0.4062px;">=</span>
<span class="t g" style="left:89.5px;letter-spacing:-0.1108px;">{TTuple&lt;FString,FConfigSection&gt;}</span>
<span class="t " style="left:287.2px;letter-spacing:-0.0472px;"><span>{L</span><span class="s">"WindowsClient DeviceProfile"</span><span>,Num=51}</span></span>
</div>
<div class="vr" style="top:140px">
<svg class="abs" style="left:21px;top:3.5px" width="10" height="12" viewBox="0 0 10 12"><path d="M3.1 2.2 L7.3 6 L3.1 9.8" fill="none" stroke="#b2b2b2" stroke-width="1.3"/></svg>
<svg class="abs" style="left:41px;top:4px" width="12" height="12" viewBox="0 0 12 12"><rect x="0.6" y="0.6" width="10.4" height="2.8" fill="#e6c23a"/><rect x="0.6" y="4.4" width="10.4" height="2.8" fill="#e6c23a"/><rect x="0.6" y="8.2" width="10.4" height="2.8" fill="#e6c23a"/></svg>
<span class="t " style="left:58.0px;letter-spacing:0.0469px;">[3]</span>
<span class="t " style="left:77.8px;letter-spacing:0.4062px;">=</span>
<span class="t g" style="left:89.5px;letter-spacing:-0.1108px;">{TTuple&lt;FString,FConfigSection&gt;}</span>
<span class="t " style="left:287.2px;letter-spacing:-0.0484px;"><span>{L</span><span class="s">"WindowsServer DeviceProfile"</span><span>,Num=51}</span></span>
</div>
<div class="vr" style="top:160px">
<svg class="abs" style="left:21px;top:3.5px" width="10" height="12" viewBox="0 0 10 12"><path d="M3.1 2.2 L7.3 6 L3.1 9.8" fill="none" stroke="#b2b2b2" stroke-width="1.3"/></svg>
<svg class="abs" style="left:41px;top:4px" width="12" height="12" viewBox="0 0 12 12"><rect x="0.6" y="0.6" width="10.4" height="2.8" fill="#e6c23a"/><rect x="0.6" y="4.4" width="10.4" height="2.8" fill="#e6c23a"/><rect x="0.6" y="8.2" width="10.4" height="2.8" fill="#e6c23a"/></svg>
<span class="t " style="left:58.0px;letter-spacing:0.0469px;">[4]</span>
<span class="t " style="left:77.8px;letter-spacing:0.4062px;">=</span>
<span class="t g" style="left:89.5px;letter-spacing:-0.1108px;">{TTuple&lt;FString,FConfigSection&gt;}</span>
<span class="t " style="left:287.2px;letter-spacing:-0.0781px;"><span>{L</span><span class="s">"IOS DeviceProfile"</span><span>,Num=66}</span></span>
</div>
<div class="vr" style="top:180px">
<svg class="abs" style="left:21px;top:3.5px" width="10" height="12" viewBox="0 0 10 12"><path d="M3.1 2.2 L7.3 6 L3.1 9.8" fill="none" stroke="#b2b2b2" stroke-width="1.3"/></svg>
<svg class="abs" style="left:41px;top:4px" width="12" height="12" viewBox="0 0 12 12"><rect x="0.6" y="0.6" width="10.4" height="2.8" fill="#e6c23a"/><rect x="0.6" y="4.4" width="10.4" height="2.8" fill="#e6c23a"/><rect x="0.6" y="8.2" width="10.4" height="2.8" fill="#e6c23a"/></svg>
<span class="t " style="left:58.0px;letter-spacing:0.0469px;">[5]</span>
<span class="t " style="left:77.8px;letter-spacing:0.4062px;">=</span>
<span class="t g" style="left:89.5px;letter-spacing:-0.1108px;">{TTuple&lt;FString,FConfigSection&gt;}</span>
<span class="t " style="left:287.2px;letter-spacing:-0.0540px;"><span>{L</span><span class="s">"iPadAir DeviceProfile"</span><span>,Num=55}</span></span>
</div>
<div class="vr" style="top:200px">
<svg class="abs" style="left:21px;top:3.5px" width="10" height="12" viewBox="0 0 10 12"><path d="M3.1 2.2 L7.3 6 L3.1 9.8" fill="none" stroke="#b2b2b2" stroke-width="1.3"/></svg>
<svg class="abs" style="left:41px;top:4px" width="12" height="12" viewBox="0 0 12 12"><rect x="0.6" y="0.6" width="10.4" height="2.8" fill="#e6c23a"/><rect x="0.6" y="4.4" width="10.4" height="2.8" fill="#e6c23a"/><rect x="0.6" y="8.2" width="10.4" height="2.8" fill="#e6c23a"/></svg>
<span class="t " style="left:58.0px;letter-spacing:0.0469px;">[6]</span>
<span class="t " style="left:77.8px;letter-spacing:0.4062px;">=</span>
<span class="t g" style="left:89.5px;letter-spacing:-0.1108px;">{TTuple&lt;FString,FConfigSection&gt;}</span>
<span class="t " style="left:287.2px;letter-spacing:-0.0593px;"><span>{L</span><span class="s">"iPadAir2 DeviceProfile"</span><span>,Num=56}</span></span>
</div>
<div class="vr" style="top:220px">
<svg class="abs" style="left:21px;top:3.5px" width="10" height="12" viewBox="0 0 10 12"><path d="M3.1 2.2 L7.3 6 L3.1 9.8" fill="none" stroke="#b2b2b2" stroke-width="1.3"/></svg>
<svg class="abs" style="left:41px;top:4px" width="12" height="12" viewBox="0 0 12 12"><rect x="0.6" y="0.6" width="10.4" height="2.8" fill="#e6c23a"/><rect x="0.6" y="4.4" width="10.4" height="2.8" fill="#e6c23a"/><rect x="0.6" y="8.2" width="10.4" height="2.8" fill="#e6c23a"/></svg>
<span class="t " style="left:58.0px;letter-spacing:0.0469px;">[7]</span>
<span class="t " style="left:77.8px;letter-spacing:0.4062px;">=</span>
<span class="t g" style="left:89.5px;letter-spacing:-0.1108px;">{TTuple&lt;FString,FConfigSection&gt;}</span>
<span class="t " style="left:287.2px;letter-spacing:-0.0277px;"><span>{L</span><span class="s">"iPadMini2 DeviceProfile"</span><span>,Num=54}</span></span>
</div>
<div class="vr" style="top:240px">
<svg class="abs" style="left:21px;top:3.5px" width="10" height="12" viewBox="0 0 10 12"><path d="M3.1 2.2 L7.3 6 L3.1 9.8" fill="none" stroke="#b2b2b2" stroke-width="1.3"/></svg>
<svg class="abs" style="left:41px;top:4px" width="12" height="12" viewBox="0 0 12 12"><rect x="0.6" y="0.6" width="10.4" height="2.8" fill="#e6c23a"/><rect x="0.6" y="4.4" width="10.4" height="2.8" fill="#e6c23a"/><rect x="0.6" y="8.2" width="10.4" height="2.8" fill="#e6c23a"/></svg>
<span class="t " style="left:58.0px;letter-spacing:0.0469px;">[8]</span>
<span class="t " style="left:77.8px;letter-spacing:0.4062px;">=</span>
<span class="t g" style="left:89.5px;letter-spacing:-0.1108px;">{TTuple&lt;FString,FConfigSection&gt;}</span>
<span class="t " style="left:287.2px;letter-spacing:-0.0277px;"><span>{L</span><span class="s">"iPadMini3 DeviceProfile"</span><span>,Num=54}</span></span>
</div>
<div class="vr" style="top:260px">
<svg class="abs" style="left:21px;top:3.5px" width="10" height="12" viewBox="0 0 10 12"><path d="M3.1 2.2 L7.3 6 L3.1 9.8" fill="none" stroke="#b2b2b2" stroke-width="1.3"/></svg>
<svg class="abs" style="left:41px;top:4px" width="12" height="12" viewBox="0 0 12 12"><rect x="0.6" y="0.6" width="10.4" height="2.8" fill="#e6c23a"/><rect x="0.6" y="4.4" width="10.4" height="2.8" fill="#e6c23a"/><rect x="0.6" y="8.2" width="10.4" height="2.8" fill="#e6c23a"/></svg>
<span class="t " style="left:58.0px;letter-spacing:0.0469px;">[9]</span>
<span class="t " style="left:77.8px;letter-spacing:0.4062px;">=</span>
<span class="t g" style="left:89.5px;letter-spacing:-0.1108px;">{TTuple&lt;FString,FConfigSection&gt;}</span>
<span class="t " style="left:287.2px;letter-spacing:-0.0277px;"><span>{L</span><span class="s">"iPadMini4 DeviceProfile"</span><span>,Num=55}</span></span>
</div>
<div class="vr" style="top:280px">
<svg class="abs" style="left:21px;top:3.5px" width="10" height="12" viewBox="0 0 10 12"><path d="M3.1 2.2 L7.3 6 L3.1 9.8" fill="none" stroke="#b2b2b2" stroke-width="1.3"/></svg>
<svg class="abs" style="left:41px;top:4px" width="12" height="12" viewBox="0 0 12 12"><rect x="0.6" y="0.6" width="10.4" height="2.8" fill="#e6c23a"/><rect x="0.6" y="4.4" width="10.4" height="2.8" fill="#e6c23a"/><rect x="0.6" y="8.2" width="10.4" height="2.8" fill="#e6c23a"/></svg>
<span class="t " style="left:58.0px;letter-spacing:-0.0233px;">[10]</span>
<span class="t " style="left:84.8px;letter-spacing:0.4062px;">=</span>
<span class="t g" style="left:96.5px;letter-spacing:-0.1108px;">{TTuple&lt;FString,FConfigSection&gt;}</span>
<span class="t " style="left:294.2px;letter-spacing:-0.1250px;"><span>{L</span><span class="s">"iPhone5S DeviceProfile"</span><span>,Num=56}</span></span>
</div>
<div class="vr" style="top:300px">
<svg class="abs" style="left:21px;top:3.5px" width="10" height="12" viewBox="0 0 10 12"><path d="M3.1 2.2 L7.3 6 L3.1 9.8" fill="none" stroke="#b2b2b2" stroke-width="1.3"/></svg>
<svg class="abs" style="left:41px;top:4px" width="12" height="12" viewBox="0 0 12 12"><rect x="0.6" y="0.6" width="10.4" height="2.8" fill="#e6c23a"/><rect x="0.6" y="4.4" width="10.4" height="2.8" fill="#e6c23a"/><rect x="0.6" y="8.2" width="10.4" height="2.8" fill="#e6c23a"/></svg>
<span class="t " style="left:58.0px;letter-spacing:0.2189px;">[11]</span>
<span class="t " style="left:84.8px;letter-spacing:0.4062px;">=</span>
<span class="t g" style="left:96.5px;letter-spacing:-0.1108px;">{TTuple&lt;FString,FConfigSection&gt;}</span>
<span class="t " style="left:294.2px;letter-spacing:-0.0225px;"><span>{L</span><span class="s">"iPodTouch6 DeviceProfile"</span><span>,Num=55}</span></span>
</div>
<div class="vr" style="top:320px">
<svg class="abs" style="left:21px;top:3.5px" width="10" height="12" viewBox="0 0 10 12"><path d="M3.1 2.2 L7.3 6 L3.1 9.8" fill="none" stroke="#b2b2b2" stroke-width="1.3"/></svg>
<svg class="abs" style="left:41px;top:4px" width="12" height="12" viewBox="0 0 12 12"><rect x="0.6" y="0.6" width="10.4" height="2.8" fill="#e6c23a"/><rect x="0.6" y="4.4" width="10.4" height="2.8" fill="#e6c23a"/><rect x="0.6" y="8.2" width="10.4" height="2.8" fill="#e6c23a"/></svg>
<span class="t " style="left:58.0px;letter-spacing:-0.0233px;">[12]</span>
<span class="t " style="left:84.8px;letter-spacing:0.4062px;">=</span>
<span class="t g" style="left:96.5px;letter-spacing:-0.1108px;">{TTuple&lt;FString,FConfigSection&gt;}</span>
<span class="t " style="left:294.2px;letter-spacing:-0.0225px;"><span>{L</span><span class="s">"iPodTouch7 DeviceProfile"</span><span>,Num=55}</span></span>
</div>
<div class="vr" style="top:340px">
<svg class="abs" style="left:21px;top:3.5px" width="10" height="12" viewBox="0 0 10 12"><path d="M3.1 2.2 L7.3 6 L3.1 9.8" fill="none" stroke="#b2b2b2" stroke-width="1.3"/></svg>
<svg class="abs" style="left:41px;top:4px" width="12" height="12" viewBox="0 0 12 12"><rect x="0.6" y="0.6" width="10.4" height="2.8" fill="#e6c23a"/><rect x="0.6" y="4.4" width="10.4" height="2.8" fill="#e6c23a"/><rect x="0.6" y="8.2" width="10.4" height="2.8" fill="#e6c23a"/></svg>
<span class="t " style="left:58.0px;letter-spacing:-0.0233px;">[13]</span>
<span class="t " style="left:84.8px;letter-spacing:0.4062px;">=</span>
<span class="t g" style="left:96.5px;letter-spacing:-0.1108px;">{TTuple&lt;FString,FConfigSection&gt;}</span>
<span class="t " style="left:294.2px;letter-spacing:-0.0781px;"><span>{L</span><span class="s">"iPhone6 DeviceProfile"</span><span>,Num=56}</span></span>
</div>
<div class="vr" style="top:360px">
<svg class="abs" style="left:21px;top:3.5px" width="10" height="12" viewBox="0 0 10 12"><path d="M3.1 2.2 L7.3 6 L3.1 9.8" fill="none" stroke="#b2b2b2" stroke-width="1.3"/></svg>
<svg class="abs" style="left:41px;top:4px" width="12" height="12" viewBox="0 0 12 12"><rect x="0.6" y="0.6" width="10.4" height="2.8" fill="#e6c23a"/><rect x="0.6" y="4.4" width="10.4" height="2.8" fill="#e6c23a"/><rect x="0.6" y="8.2" width="10.4" height="2.8" fill="#e6c23a"/></svg>
<span class="t " style="left:58.0px;letter-spacing:-0.0233px;">[14]</span>
<span class="t " style="left:84.8px;letter-spacing:0.4062px;">=</span>
<span class="t g" style="left:96.5px;letter-spacing:-0.1108px;">{TTuple&lt;FString,FConfigSection&gt;}</span>
<span class="t " style="left:294.2px;letter-spacing:-0.1318px;"><span>{L</span><span class="s">"iPhone6Plus DeviceProfile"</span><span>,Num=56}</span></span>
</div>
<div class="vr" style="top:380px">
<svg class="abs" style="left:21px;top:3.5px" width="10" height="12" viewBox="0 0 10 12"><path d="M3.1 2.2 L7.3 6 L3.1 9.8" fill="none" stroke="#b2b2b2" stroke-width="1.3"/></svg>
<svg class="abs" style="left:41px;top:4px" width="12" height="12" viewBox="0 0 12 12"><rect x="0.6" y="0.6" width="10.4" height="2.8" fill="#e6c23a"/><rect x="0.6" y="4.4" width="10.4" height="2.8" fill="#e6c23a"/><rect x="0.6" y="8.2" width="10.4" height="2.8" fill="#e6c23a"/></svg>
<span class="t " style="left:58.0px;letter-spacing:-0.0233px;">[15]</span>
<span class="t " style="left:84.8px;letter-spacing:0.4062px;">=</span>
<span class="t g" style="left:96.5px;letter-spacing:-0.1108px;">{TTuple&lt;FString,FConfigSection&gt;}</span>
<span class="t " style="left:294.2px;letter-spacing:-0.1250px;"><span>{L</span><span class="s">"iPhone6S DeviceProfile"</span><span>,Num=56}</span></span>
</div>
<div class="vr" style="top:400px">
<svg class="abs" style="left:21px;top:3.5px" width="10" height="12" viewBox="0 0 10 12"><path d="M3.1 2.2 L7.3 6 L3.1 9.8" fill="none" stroke="#b2b2b2" stroke-width="1.3"/></svg>
<svg class="abs" style="left:41px;top:4px" width="12" height="12" viewBox="0 0 12 12"><rect x="0.6" y="0.6" width="10.4" height="2.8" fill="#e6c23a"/><rect x="0.6" y="4.4" width="10.4" height="2.8" fill="#e6c23a"/><rect x="0.6" y="8.2" width="10.4" height="2.8" fill="#e6c23a"/></svg>
<span class="t " style="left:58.0px;letter-spacing:-0.0233px;">[16]</span>
<span class="t " style="left:84.8px;letter-spacing:0.4062px;">=</span>
<span class="t g" style="left:96.5px;letter-spacing:-0.1108px;">{TTuple&lt;FString,FConfigSection&gt;}</span>
<span class="t " style="left:294.2px;letter-spacing:-0.1718px;"><span>{L</span><span class="s">"iPhone6SPlus DeviceProfile"</span><span>,Num=56}</span></span>
</div>
<div class="vr" style="top:420px">
<svg class="abs" style="left:21px;top:3.5px" width="10" height="12" viewBox="0 0 10 12"><path d="M3.1 2.2 L7.3 6 L3.1 9.8" fill="none" stroke="#b2b2b2" stroke-width="1.3"/></svg>
<svg class="abs" style="left:41px;top:4px" width="12" height="12" viewBox="0 0 12 12"><rect x="0.6" y="0.6" width="10.4" height="2.8" fill="#e6c23a"/><rect x="0.6" y="4.4" width="10.4" height="2.8" fill="#e6c23a"/><rect x="0.6" y="8.2" width="10.4" height="2.8" fill="#e6c23a"/></svg>
<span class="t " style="left:58.0px;letter-spacing:-0.0233px;">[17]</span>
<span class="t " style="left:84.8px;letter-spacing:0.4062px;">=</span>
<span class="t g" style="left:96.5px;letter-spacing:-0.1108px;">{TTuple&lt;FString,FConfigSection&gt;}</span>
<span class="t " style="left:294.2px;letter-spacing:-0.1678px;"><span>{L</span><span class="s">"iPhoneSE DeviceProfile"</span><span>,Num=56}</span></span>
</div>
<div class="vr" style="top:440px">
<svg class="abs" style="left:21px;top:3.5px" width="10" height="12" viewBox="0 0 10 12"><path d="M3.1 2.2 L7.3 6 L3.1 9.8" fill="none" stroke="#b2b2b2" stroke-width="1.3"/></svg>
<svg class="abs" style="left:41px;top:4px" width="12" height="12" viewBox="0 0 12 12"><rect x="0.6" y="0.6" width="10.4" height="2.8" fill="#e6c23a"/><rect x="0.6" y="4.4" width="10.4" height="2.8" fill="#e6c23a"/><rect x="0.6" y="8.2" width="10.4" height="2.8" fill="#e6c23a"/></svg>
<span class="t " style="left:58.0px;letter-spacing:-0.0233px;">[18]</span>
<span class="t " style="left:84.8px;letter-spacing:0.4062px;">=</span>
<span class="t g" style="left:96.5px;letter-spacing:-0.1108px;">{TTuple&lt;FString,FConfigSection&gt;}</span>
<span class="t " style="left:294.2px;letter-spacing:-0.0781px;"><span>{L</span><span class="s">"iPhone7 DeviceProfile"</span><span>,Num=55}</span></span>
</div>
<div class="vr" style="top:460px">
<svg class="abs" style="left:21px;top:3.5px" width="10" height="12" viewBox="0 0 10 12"><path d="M3.1 2.2 L7.3 6 L3.1 9.8" fill="none" stroke="#b2b2b2" stroke-width="1.3"/></svg>
<svg class="abs" style="left:41px;top:4px" width="12" height="12" viewBox="0 0 12 12"><rect x="0.6" y="0.6" width="10.4" height="2.8" fill="#e6c23a"/><rect x="0.6" y="4.4" width="10.4" height="2.8" fill="#e6c23a"/><rect x="0.6" y="8.2" width="10.4" height="2.8" fill="#e6c23a"/></svg>
<span class="t " style="left:58.0px;letter-spacing:-0.0233px;">[19]</span>
<span class="t " style="left:84.8px;letter-spacing:0.4062px;">=</span>
<span class="t g" style="left:96.5px;letter-spacing:-0.1108px;">{TTuple&lt;FString,FConfigSection&gt;}</span>
<span class="t " style="left:294.2px;letter-spacing:-0.1318px;"><span>{L</span><span class="s">"iPhone7Plus DeviceProfile"</span><span>,Num=55}</span></span>
</div>
</div>
</body></html>
